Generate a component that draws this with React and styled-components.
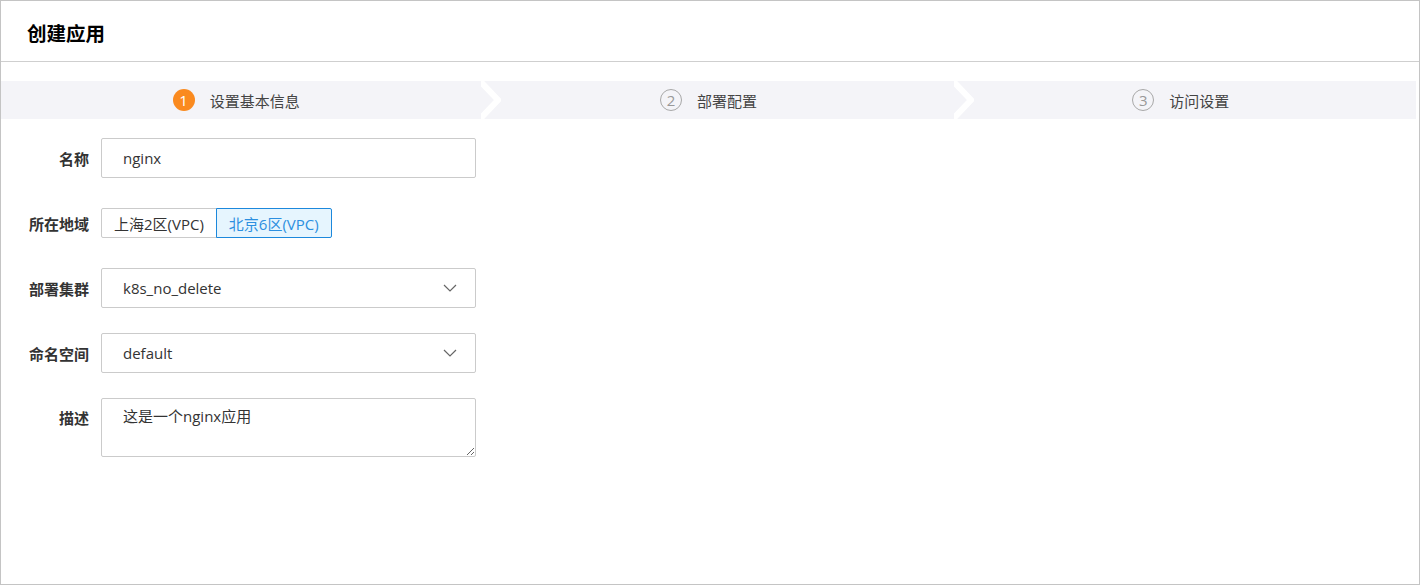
import React from "react";
import styled, { createGlobalStyle } from "styled-components";

const GlobalStyle = createGlobalStyle`
  html, body {
    margin: 0;
    padding: 0;
    background: #fff;
  }
  body {
    font-family: "Open Sans", "Noto Sans CJK SC", sans-serif;
    color: #333;
  }
  * {
    box-sizing: border-box;
  }
`;

const Page = styled.div`
  width: 1420px;
  height: 585px;
  border: 1px solid #c4c4c4;
  display: flex;
  flex-direction: column;
`;

const Header = styled.div`
  height: 61px;
  border-bottom: 1px solid #cfcfcf;
  display: flex;
  align-items: center;
  padding-left: 26px;
  padding-top: 2px;
  h1 {
    margin: 0;
    font-size: 19.5px;
    font-weight: bold;
    color: #000;
    font-family: "Noto Sans CJK SC", sans-serif;
  }
`;

const Steps = styled.div`
  display: flex;
  height: 38px;
  margin: 19px 3px 0 0;
  background: #f4f4f8;
  overflow: hidden;
`;

const Step = styled.div`
  position: relative;
  flex: 1;
  display: flex;
  align-items: center;
  justify-content: center;
  gap: 15px;
  font-size: 15px;
  color: #444;
  font-family: "Noto Sans CJK SC", sans-serif;
  padding-left: ${(p) => p.$shift || 0}px;
`;

const Num = styled.span`
  width: 22px;
  height: 22px;
  border-radius: 50%;
  display: flex;
  align-items: center;
  justify-content: center;
  font-family: "Open Sans", sans-serif;
  font-size: 15px;
  background: ${(p) => (p.$active ? "#fa8a1f" : "transparent")};
  color: ${(p) => (p.$active ? "#fff" : "#999")};
  border: ${(p) => (p.$active ? "none" : "1px solid #a8a8a8")};
`;

const Arrow = styled.svg`
  position: absolute;
  right: -30px;
  top: 0;
  z-index: 1;
`;

const Form = styled.div`
  display: grid;
  grid-template-columns: 88px 375px;
  column-gap: 12px;
  margin-top: 19px;
  align-items: center;
`;

const Label = styled.label`
  justify-self: end;
  align-self: ${(p) => (p.$top ? "start" : "center")};
  padding-top: ${(p) => (p.$top ? "9px" : "0")};
  font-size: 15px;
  font-weight: bold;
  color: #333;
  font-family: "Noto Sans CJK SC", sans-serif;
  margin-bottom: ${(p) => p.$mb}px;
`;

const Field = styled.div`
  position: relative;
  height: 40px;
  border: 1px solid #cbcbcb;
  border-radius: 2px;
  display: flex;
  align-items: center;
  padding: 0 18px 0 21px;
  font-size: 15px;
  color: #333;
  margin-bottom: ${(p) => p.$mb}px;
  justify-content: space-between;
`;

const Segment = styled.div`
  display: flex;
  height: 30px;
  margin-bottom: ${(p) => p.$mb}px;
`;

const SegButton = styled.div`
  height: 30px;
  padding: 0 12px;
  display: flex;
  align-items: center;
  font-size: 15px;
  border: 1px solid ${(p) => (p.$on ? "#1c88dc" : "#cbcbcb")};
  background: ${(p) => (p.$on ? "#e6f5fe" : "#fff")};
  color: ${(p) => (p.$on ? "#2c8fe0" : "#333")};
  border-radius: ${(p) => (p.$first ? "2px 0 0 2px" : "0 2px 2px 0")};
  margin-left: ${(p) => (p.$first ? "0" : "-1px")};
`;

const TextArea = styled.textarea`
  height: 59px;
  border: 1px solid #cbcbcb;
  border-radius: 2px;
  padding: 6px 21px;
  font-size: 15px;
  font-family: "Open Sans", "Noto Sans CJK SC", sans-serif;
  color: #333;
  resize: vertical;
  outline: none;
`;

const Chevron = () => (
  <svg width="14" height="8" viewBox="0 0 14 8">
    <path d="M1 1 L7 7 L13 1" fill="none" stroke="#666" strokeWidth="1.2" />
  </svg>
);

const steps = ["设置基本信息", "部署配置", "访问设置"];

export default function App() {
  return (
    <>
      <GlobalStyle />
      <Page>
        <Header>
          <h1>创建应用</h1>
        </Header>
        <Steps>
          {steps.map((s, i) => (
            <Step key={s} $shift={i === 0 ? 0 : 2}>
              <Num $active={i === 0}>{i + 1}</Num>
              {s}
              {i < 2 && (
                <Arrow width="20" height="38" viewBox="0 0 20 38">
                  <path d="M-1 0 L17 19 L-1 38" fill="none" stroke="#fff" strokeWidth="6" />
                </Arrow>
              )}
            </Step>
          ))}
        </Steps>
        <Form>
          <Label $mb={30}>名称</Label>
          <Field $mb={30}>nginx</Field>

          <Label $mb={30}>所在地域</Label>
          <Segment $mb={30}>
            <SegButton $first>上海2区(VPC)</SegButton>
            <SegButton $on>北京6区(VPC)</SegButton>
          </Segment>

          <Label $mb={25}>部署集群</Label>
          <Field $mb={25}>
            k8s_no_delete
            <Chevron />
          </Field>

          <Label $mb={25}>命名空间</Label>
          <Field $mb={25}>
            default
            <Chevron />
          </Field>

          <Label $top>描述</Label>
          <TextArea defaultValue="这是一个nginx应用" />
        </Form>
      </Page>
    </>
  );
}
